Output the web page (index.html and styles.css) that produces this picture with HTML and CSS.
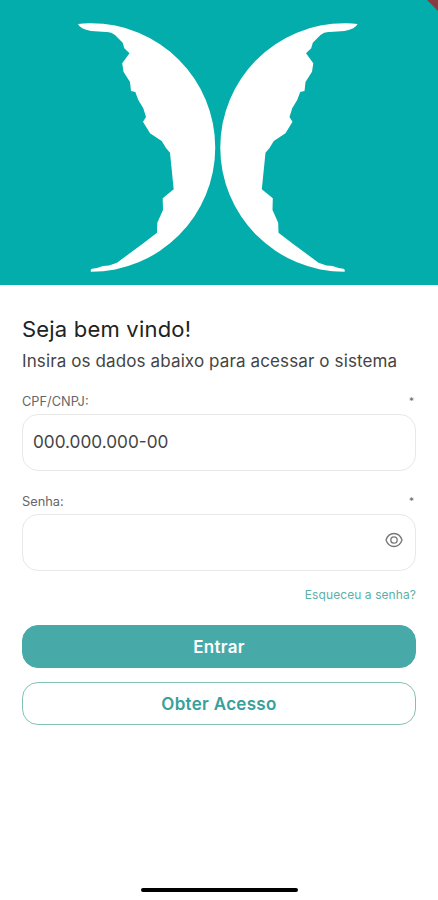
FILE: index.html
```html
<!DOCTYPE html>
<html lang="pt-BR">
<head>
<meta charset="utf-8">
<title>Entrar</title>
<link rel="stylesheet" href="styles.css">
</head>
<body>
<header class="hero">
  <svg class="logo" viewBox="0 0 438 284" aria-hidden="true">
    <defs>
      <path id="wing" d="M78 24Q84 23 91 23.200A124.300 124.300 0 0 1 91 271.800Q90 270 92 268.800L97 268L103 266L109 265.500L117 262.700L122 259L143 243.500L157 232.700L157.300 222.700L163 210L162.700 198.300L173.700 189.300L170 152.700L166 148L161.700 141L150 133.300L143 121.700L146 117L143.300 108.300L138.300 100L135.300 92L131 91L130 82L123.500 71.700L122.200 63.300L129.500 53.300L124.300 48.300L122.700 42.700L115 35Q111 31.500 106 32L91 31Q80 29 78 24Z"/>
    </defs>
    <use href="#wing"/>
    <use href="#wing" transform="translate(435.500 0) scale(-1 1)"/>
  </svg>
  <span class="ribbon"></span>
</header>
<main class="content">
  <h1 class="title">Seja bem vindo!</h1>
  <p class="subtitle">Insira os dados abaixo para acessar o sistema</p>
  <form class="form">
    <div class="label"><label for="doc">CPF/CNPJ:</label><span class="req">*</span></div>
    <div class="field"><input id="doc" type="text" value="000.000.000-00"></div>
    <div class="label second"><label for="pass">Senha:</label><span class="req">*</span></div>
    <div class="field">
      <input id="pass" type="password">
      <svg class="eye" viewBox="0 0 18 16" aria-hidden="true"><path d="M1 8C2.500 3.500 5.500 1.500 9 1.500S15.500 3.500 17 8C15.500 12.500 12.500 14.500 9 14.500S2.500 12.500 1 8Z"/><circle cx="9" cy="8" r="3.200"/></svg>
    </div>
    <a class="forgot">Esqueceu a senha?</a>
    <button class="btn primary" type="button">Entrar</button>
    <button class="btn outline" type="button">Obter Acesso</button>
  </form>
</main>
<footer class="home"></footer>
</body>
</html>
```
FILE: styles.css
```css
* { box-sizing: border-box; }
body {
  margin: 0;
  height: 900px;
  display: flex;
  flex-direction: column;
  background: #fff;
  font-family: Inter, "Liberation Sans", sans-serif;
  color: #222;
  overflow: hidden;
}
.hero {
  position: relative;
  height: 284.500px;
  flex: none;
  background: #03adab;
  overflow: hidden;
}
.logo { display: block; width: 438px; height: 284px; fill: #fff; }
.ribbon {
  position: absolute;
  top: -9px;
  right: -14px;
  width: 34px;
  height: 14px;
  background: #873c40;
  transform: rotate(45deg);
}
.content { flex: 1; padding: 31px 22px 0 22px; }
.title {
  margin: 0;
  font-size: 22px;
  line-height: 26px;
  font-weight: 400;
  letter-spacing: 0.200px;
}
.subtitle {
  margin: 8px 0 0;
  font-size: 17px;
  line-height: 22px;
  letter-spacing: 0.120px;
  color: #444;
  white-space: nowrap;
}
.form { display: flex; flex-direction: column; }
.label {
  display: flex;
  justify-content: space-between;
  margin-top: 21px;
  padding-right: 2px;
  height: 16px;
  font-size: 12.800px;
  line-height: 17px;
  color: #666;
}
.label.second { margin-top: 22px; }
.req { font-size: 10px; line-height: 16px; }
.field {
  display: flex;
  align-items: center;
  height: 57px;
  margin-top: 5px;
  padding: 0 12px 2px 10px;
  border: 1px solid #e8e8e8;
  border-radius: 16px;
}
.field input {
  flex: 1;
  min-width: 0;
  padding: 1px 0 0;
  border: 0;
  outline: 0;
  background: none;
  font: 400 17.200px/24px Inter, sans-serif;
  color: #444;
}
.eye { width: 18px; height: 16px; margin-bottom: 3px; fill: none; stroke: #777; stroke-width: 1.300; }
.forgot {
  align-self: flex-end;
  margin-top: 16px;
  font-size: 12px;
  line-height: 16px;
  letter-spacing: 0.080px;
  color: #5bb0a8;
}
.btn {
  height: 43px;
  padding: 1px 0 0;
  border: 1px solid #47aaa9;
  border-radius: 16px;
  font: 600 17px/24px Inter, sans-serif;
  letter-spacing: 0.300px;
}
.primary { margin-top: 22px; background: #47aaa9; color: #fff; }
.outline { margin-top: 14px; background: #fff; border-color: #83c0b4; color: #36a09b; }
.home {
  flex: none;
  width: 157px;
  height: 4px;
  margin: 0 auto 8px;
  border-radius: 2px;
  background: #000;
}
```
